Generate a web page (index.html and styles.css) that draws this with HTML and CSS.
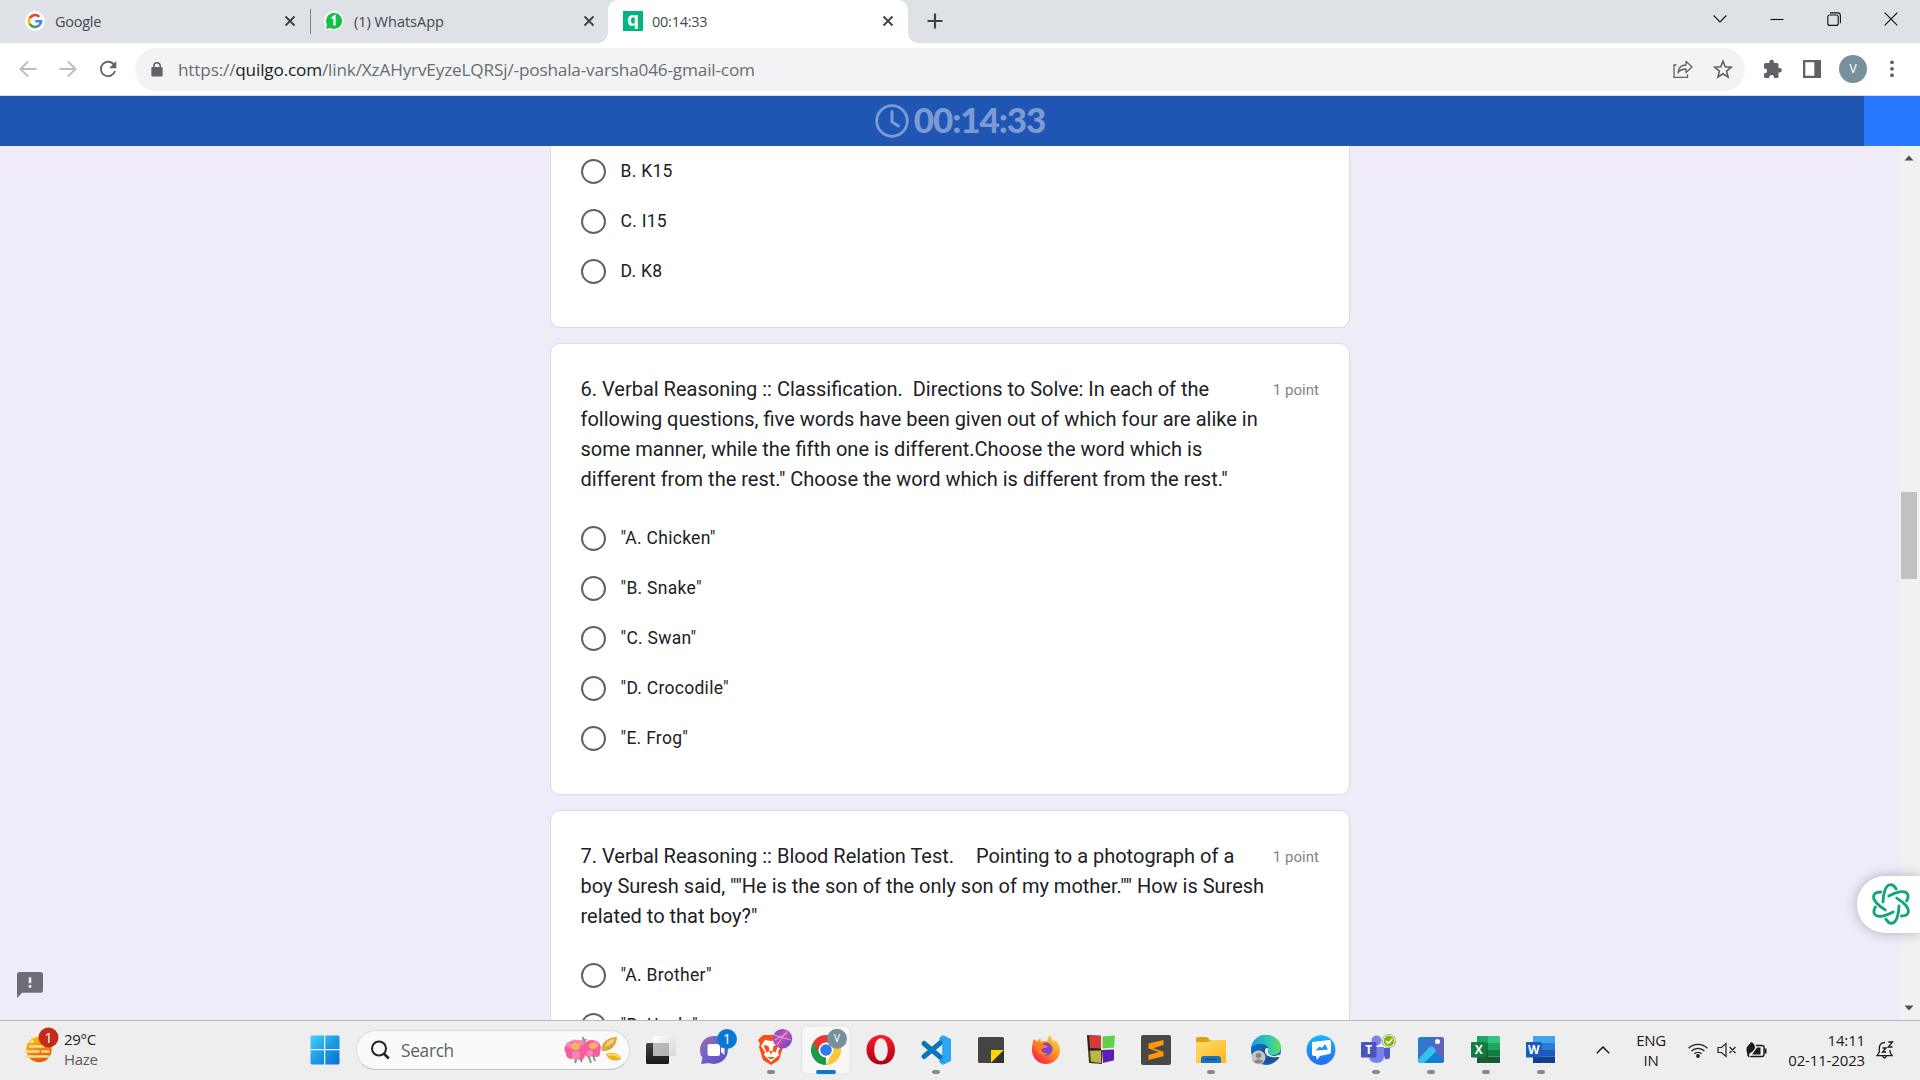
FILE: index.html
```html
<!DOCTYPE html>
<html lang="en">
<head>
<meta charset="utf-8">
<title>00:14:33</title>
<link rel="stylesheet" href="styles.css">
</head>
<body>
<header class="tabstrip">
  <div class="tab tab-google">
    <svg width="20" height="20" viewBox="0 0 20 20"><circle cx="10" cy="10" r="10" fill="#fff"/><g fill="none" stroke-width="2.6"><path d="M14.3 5.9A6 6 0 0 0 4.7 7.2" stroke="#ea4335"/><path d="M4.8 7A6 6 0 0 0 4.8 13" stroke="#fbbc05"/><path d="M4.7 12.8A6 6 0 0 0 13.9 14.5" stroke="#34a853"/><path d="M13.8 14.6A6 6 0 0 0 16 10.3H10.2" stroke="#4285f4"/></g></svg>
    <span class="tab-title">Google</span>
    <svg class="tab-close" width="12" height="12" viewBox="0 0 12 12"><path d="M1.5 1.5l9 9M10.5 1.5l-9 9"/></svg>
  </div>
  <div class="tab-divider"></div>
  <div class="tab tab-whatsapp">
    <svg width="20" height="20" viewBox="0 0 20 20"><path d="M.5 19.5l1.2-5A9.5 9.5 0 1 1 6 18.3z" fill="#fff"/><path d="M2 18l1-4.300A8 8 0 1 1 6.300 17z" fill="#12c143"/><path d="M7.700 7.300l2.800-1.900v9.200" fill="none" stroke="#fff" stroke-width="2.200"/></svg>
    <span class="tab-title tab-title-wide">(1) WhatsApp</span>
    <svg class="tab-close" width="12" height="12" viewBox="0 0 12 12"><path d="M1.5 1.5l9 9M10.5 1.5l-9 9"/></svg>
  </div>
  <div class="tab tab-active">
    <span class="quilgo-mark">q</span>
    <span class="tab-title">00:14:33</span>
    <svg class="tab-close" width="12" height="12" viewBox="0 0 12 12"><path d="M1.5 1.5l9 9M10.5 1.5l-9 9"/></svg>
  </div>
  <svg class="new-tab" width="16" height="16" viewBox="0 0 16 16"><path d="M8 .5v15M.5 8h15"/></svg>
  <div class="window-controls">
    <svg viewBox="0 0 14 14"><path d="M.7 3.500L7 10l6.300-6.500" stroke-width="1.100"/></svg>
    <svg viewBox="0 0 14 14"><path d="M.5 7.500h13"/></svg>
    <svg viewBox="0 0 14 14"><rect x=".8" y="3" width="10.400" height="10.400" rx="2"/><path d="M3 .9h7.500q2.900 0 2.900 2.900v7.500"/></svg>
    <svg viewBox="0 0 14 14"><path d="M.7 .7l12.600 12.600M13.300 .7L.7 13.300" stroke-width="1.200"/></svg>
  </div>
</header>
<nav class="toolbar">
  <div class="nav-buttons">
    <svg class="nav-off" viewBox="0 0 18 18"><path d="M17.500 9H2M9 1.500L1.500 9 9 16.500"/></svg>
    <svg class="nav-off" viewBox="0 0 18 18"><path d="M.5 9H16M9 1.500L16.500 9 9 16.500"/></svg>
    <svg class="nav-on" viewBox="0 0 18 18"><path d="M15 4.800A7.200 7.200 0 1 0 16 11"/><path d="M17.300 1v7.200h-7.200z" fill="#5f6368" stroke="none"/></svg>
  </div>
  <div class="omnibox">
    <svg width="12" height="15" viewBox="0 0 12 15"><rect x=".4" y="5" width="11.200" height="9.500" rx="1.200" fill="#5f6368"/><path d="M2.800 6V3.900a3.200 3.200 0 0 1 6.400 0V6" fill="none" stroke="#5f6368" stroke-width="1.500"/></svg>
    <span class="url">https://<b>quilgo.com</b>/link/XzAHyrvEyzeLQRSj/-poshala-varsha046-gmail-com</span>
    <svg class="share" width="20" height="20" viewBox="0 0 20 20"><g fill="none" stroke="#5f6368" stroke-width="1.300"><path d="M3.500 6H1v12.300h13.500v-3"/><path d="M5 14c.4-5 3-8 8-8V2.300l6 5.700-6 5.500V10c-4 0-6.500 1-8 4z" stroke-linejoin="round"/></g></svg>
    <svg width="20" height="20" viewBox="0 0 20 20"><path d="M10 2.200l2.200 5.600 6 .4-4.600 3.900 1.500 5.900L10 14.800 4.900 18l1.500-5.900L1.800 8.200l6-.4z" fill="none" stroke="#5f6368" stroke-width="1.600"/></svg>
  </div>
  <div class="toolbar-actions">
    <svg width="20" height="20" viewBox="0 0 20 20"><path d="M1 5.500Q1 4 2.500 4h3.800V3a2.300 2.300 0 0 1 4.600 0v1H14q1.500 0 1.500 1.500v3.500h1a2.300 2.300 0 0 1 0 4.600h-1v4q0 1.500-1.500 1.500h-3v-.8a2.400 2.400 0 0 0-4.800 0v.8H2.500Q1 19.100 1 17.600v-3.300h.7a2.400 2.400 0 0 0 0-4.800H1z" fill="#5f6368"/></svg>
    <svg width="18" height="18" viewBox="0 0 18 18"><path d="M0 0h18v18H0zM2.300 2.300v13.400h9V2.300z" fill="#5f6368" fill-rule="evenodd"/></svg>
    <span class="avatar">V</span>
    <svg width="6" height="18" viewBox="0 0 6 18"><g fill="#5f6368"><circle cx="3" cy="2.300" r="1.900"/><circle cx="3" cy="8.800" r="1.900"/><circle cx="3" cy="15.200" r="1.900"/></g></svg>
  </div>
</nav>
<div class="timer">
  <div class="timer-value">
    <svg width="34" height="34" viewBox="0 0 34 34"><g fill="none" stroke="#7c9ad3" stroke-linecap="round"><circle cx="17" cy="17" r="15.300" stroke-width="2.800"/><path d="M17 7.500v10.500l6.500 4" stroke-width="3"/></g></svg>
    <span>00:14:33</span>
  </div>
</div>
<main class="viewport">
  <div class="page">
    <section class="card card-cut">
      <label class="option"><i class="radio"></i><span>B. K15</span></label>
      <label class="option"><i class="radio"></i><span>C. I15</span></label>
      <label class="option"><i class="radio"></i><span>D. K8</span></label>
    </section>
    <section class="card">
      <div class="question"><p>6. Verbal Reasoning :: Classification.&nbsp; Directions to Solve: In each of the<br>following questions, five words have been given out of which four are alike in<br>some manner, while the fifth one is different.Choose the word which is<br>different from the rest." Choose the word which is different from the rest."</p><span class="points">1 point</span></div>
      <label class="option"><i class="radio"></i><span>"A. Chicken"</span></label>
      <label class="option"><i class="radio"></i><span>"B. Snake"</span></label>
      <label class="option"><i class="radio"></i><span>"C. Swan"</span></label>
      <label class="option"><i class="radio"></i><span>"D. Crocodile"</span></label>
      <label class="option"><i class="radio"></i><span>"E. Frog"</span></label>
    </section>
    <section class="card">
      <div class="question"><p>7. Verbal Reasoning :: Blood Relation Test.<span class="wide-gap">&nbsp; &nbsp; </span>Pointing to a photograph of a<br>boy Suresh said, ""He is the son of the only son of my mother."" How is Suresh<br>related to that boy?"</p><span class="points">1 point</span></div>
      <label class="option"><i class="radio"></i><span>"A. Brother"</span></label>
      <label class="option"><i class="radio"></i><span>"B. Uncle"</span></label>
    </section>
  </div>
  <div class="scrollbar">
    <svg width="10" height="6" viewBox="0 0 10 6"><path d="M5 .5L9.500 5.500h-9z" fill="#505050"/></svg>
    <div class="thumb"></div>
    <svg width="10" height="6" viewBox="0 0 10 6"><path d="M5 5.500L9.500 .5h-9z" fill="#505050"/></svg>
  </div>
  <svg class="report" width="26" height="26" viewBox="0 0 26 26"><path d="M2.600 0h20.800Q26 0 26 2.600v15.600q0 2.600-2.600 2.600H5.200L0 26V2.600Q0 0 2.600 0z" fill="#706c76"/><path d="M11.700 5.200h2.600v6h-2.600zM11.700 13h2.600v2.700h-2.600z" fill="#efebf9"/></svg>
  <div class="assistant">
    <svg width="42" height="42" viewBox="-21 -21 42 42"><g fill="none" stroke="#10a37f" stroke-width="2.800" stroke-linecap="round">
      <path id="petal" d="M-8-2C-7.800-9-6-19.300-.3-19.300C2.500-19.300 4-17 5.200-15"/>
      <use href="#petal" transform="rotate(60)"/><use href="#petal" transform="rotate(120)"/><use href="#petal" transform="rotate(180)"/><use href="#petal" transform="rotate(240)"/><use href="#petal" transform="rotate(300)"/></g></svg>
  </div>
</main>
<footer class="taskbar">
  <div class="weather">
    <svg width="36" height="40" viewBox="0 0 36 40"><defs><linearGradient id="sun" x2=".4" y2="1"><stop stop-color="#fdd000"/><stop offset="1" stop-color="#e8590c"/></linearGradient></defs><circle cx="15" cy="22.500" r="12.700" fill="url(#sun)"/><g stroke="#f0dba4" stroke-width="2.400" stroke-linecap="round"><path d="M6 14.500h3M6 19.500h13M1.500 24.500h13M18.500 24.500h6M1.500 29.500h23"/></g><circle cx="24.500" cy="10.500" r="10" fill="#c42b1c"/><text x="24.500" y="15.800" text-anchor="middle" class="badge-text">1</text></svg>
    <div class="weather-text"><span>29°C</span><span class="muted">Haze</span></div>
  </div>
  <div class="apps">
    <svg class="start" width="30" height="30" viewBox="0 0 30 30"><defs><linearGradient id="win" x2="1" y2="1" gradientUnits="objectBoundingBox"><stop stop-color="#4bd0ff"/><stop offset=".5" stop-color="#1c9be6"/><stop offset="1" stop-color="#0673d3"/></linearGradient></defs><path d="M1.500.500H14V14H.500V1.500zM15.300.500H28Q29.500.500 29.500 2V14H15.300zM.500 15.300H14V29.500H2Q.500 29.500.500 28zM15.300 15.300H29.500V28Q29.500 29.500 28 29.500H15.300z" fill="url(#win)"/></svg>
    <div class="search">
      <svg width="20" height="20" viewBox="0 0 20 20"><g fill="none" stroke="#222" stroke-width="2"><circle cx="9" cy="8.500" r="7"/><path d="M13.800 13.500l5 5" stroke-width="2.600"/></g></svg>
      <span>Search</span>
      <svg width="60" height="30" viewBox="0 0 60 30"><path d="M11 20l2 7M15 19l-3 9M20 2l1 7M23 4l-4 6M25 20l3 8M29 18l3 8M20 20l-2 7" stroke="#7d9f83" stroke-width="2"/><g fill="#f55f9b"><ellipse cx="13" cy="14" rx="11.500" ry="9"/><circle cx="8" cy="19" r="5"/><circle cx="17" cy="20" r="5"/><ellipse cx="29" cy="13" rx="9" ry="8"/><circle cx="26" cy="18" r="4"/><circle cx="33" cy="18" r="4"/></g><g fill="#fa86b5"><circle cx="6" cy="10" r="3"/><circle cx="13" cy="20" r="4"/><circle cx="18" cy="8" r="3"/><circle cx="27" cy="18" r="3"/><circle cx="33" cy="9" r="3"/><circle cx="12" cy="7" r="2.500"/></g><ellipse cx="12.500" cy="11.500" rx="4.500" ry="3.500" fill="#f2b75e"/><ellipse cx="30" cy="11" rx="4" ry="3" fill="#f2b75e"/><path d="M39 16C37 8 45 2 54 2c0 8-6 15-15 14z" fill="#dba83c"/><path d="M42 12C43 7 47 4 52 4c-2 5-6 6-10 8z" fill="#f3d281"/><path d="M43 19c7-3 14 0 15 5-4 3-13 2-15-5z" fill="#e9b424"/><path d="M45 20c5-1 9 0 11 3" stroke="#fbdb61" stroke-width="2" fill="none"/></svg>
    </div>
    <svg class="app" viewBox="0 0 55 60"><defs><linearGradient id="tv" x2="0" y2="1"><stop stop-color="#454545"/><stop offset="1" stop-color="#171717"/></linearGradient><linearGradient id="tw" x2="1" y2="1"><stop stop-color="#fff"/><stop offset="1" stop-color="#d6d6d6"/></linearGradient></defs><rect x="13" y="23" width="23" height="21" rx="1.500" fill="url(#tv)"/><rect x="20" y="16" width="23" height="20" rx="1.500" fill="url(#tw)"/><path d="M20 23h16v13H20z" fill="#aaa" opacity=".8"/></svg>
    <svg class="app" viewBox="0 0 55 60"><defs><linearGradient id="ch" x2="1" y2="1"><stop stop-color="#9b6fb3"/><stop offset="1" stop-color="#4d4fd0"/></linearGradient></defs><path d="M13 44l1.500-6A14 14 0 1 1 21 43z" fill="url(#ch)"/><rect x="19.500" y="24" width="12.500" height="12" rx="2" fill="#fff"/><path d="M33 28l3.500-3v10L33 32z" fill="#fff"/><circle cx="39" cy="19" r="10" fill="#0878d4"/><text x="39" y="24.300" text-anchor="middle" class="badge-text">1</text></svg>
    <svg class="app" viewBox="0 0 55 60"><defs><linearGradient id="bb" x2="1" y2="1"><stop stop-color="#7450bd"/><stop offset=".5" stop-color="#c54fae"/><stop offset="1" stop-color="#4544e0"/></linearGradient></defs><path d="M21 15h14l5 4-1 5 1 3-4 13-8 5-8-5-4-13 1-3-2-4 4-4z" fill="#fb4d16"/><path d="M22 20l6 1 6-1 4 6-3 6 1 3-8 7-7-7 1-3-4-6z" fill="#fff"/><path d="M20.500 25l5 1 1 5-3 1.500zM35.500 25l-5 1-1 5 3 1.500zM24 37h8l-4 2.500zM26 31h4l-2 3.500z" fill="#fb4d16"/><circle cx="39.500" cy="18.700" r="9.700" fill="url(#bb)"/><path d="M31 15l17 5M34 25L44 11M31.500 20l13-7" stroke="#d8a7df" stroke-width="1"/><rect x="24" y="50" width="8" height="4" rx="2" fill="#888"/></svg>
    <svg class="app" viewBox="0 0 55 60"><rect x="4" y="6" width="48" height="48" rx="5" fill="#f8f8f8" stroke="#e2e2e2"/><path d="M28 30L28 45A15 15 0 0 1 15 22.500z" fill="#1f9a48"/><path d="M28 22.500H41A15 15 0 0 1 28 45L34 33z" fill="#fdc72f"/><path d="M15 22.500A15 15 0 0 1 41 22.500H28L21.500 33.500z" fill="#e33b2e"/><circle cx="28" cy="30" r="7.500" fill="#fff"/><circle cx="28" cy="30" r="5.800" fill="#2f7ded"/><circle cx="39" cy="18.700" r="10" fill="#78909c"/><text x="39" y="22.300" text-anchor="middle" class="v-text">V</text><rect x="18" y="50" width="20" height="4" rx="2" fill="#0b78d4"/></svg>
    <svg class="app" viewBox="0 0 55 60"><defs><linearGradient id="op" x2="0" y2="1"><stop stop-color="#ff1b2d"/><stop offset="1" stop-color="#a70014"/></linearGradient></defs><path fill-rule="evenodd" d="M28 15c8.300 0 14 6.500 14 15s-5.700 14.500-14 14.500S13.500 38.500 13.500 30 19.700 15 28 15zm0 3.300c-4 0-6.700 5-6.700 11.700S24 41 28 41s6.700-4.500 6.700-11S32 18.300 28 18.300z" fill="url(#op)"/></svg>
    <svg class="app" viewBox="0 0 55 60"><path d="M16 23.500L37 41M16 36.500L37 19" stroke="#0877b9" stroke-width="5" stroke-linecap="round"/><path d="M34.500 15l8.500 4v22l-8.500 4z" fill="#2da5f2"/><path d="M34.500 15L31 18.500l4 5v13l-4 5 3.500 3.500z" fill="#249ce8"/><rect x="24" y="50" width="8" height="4" rx="2" fill="#888"/></svg>
    <svg class="app" viewBox="0 0 55 60"><rect x="15" y="17" width="26" height="26" rx="1.500" fill="#444"/><path d="M28 30h13L28 43z" fill="#ffd500"/><path d="M41 30v13H28z" fill="#333"/></svg>
    <svg class="app" viewBox="0 0 55 60"><defs><linearGradient id="ff" x1="1" x2=".2" y2="1"><stop stop-color="#ffe83a"/><stop offset=".5" stop-color="#ff9123"/><stop offset="1" stop-color="#f7154d"/></linearGradient></defs><path d="M15.500 19l4 2.500 3-4v4c3-1 6 0 7-1 0-3 1-4 3-5.500 0 3 2 5 4 7l1-2c3 4 4.500 6 4.500 10A14 14 0 0 1 14 30c0-5 1-7 1.500-11z" fill="url(#ff)"/><circle cx="28" cy="29" r="6.500" fill="#7b45cf"/><path d="M17 24c5-2 8 0 10 1l3 1c-2 3-4 1-6 3s2 5 6 4c-5 5-12 1-13-9z" fill="#ff7b20"/></svg>
    <svg class="app" viewBox="0 0 55 60"><path d="M14 15l14 1v14H15z" fill="#242424"/><path d="M16 15.500h12v13L17 28z" fill="#d63a38"/><path d="M29.500 16.500L42 15.500 41 27.500l-11.500 1z" fill="#61cf48"/><path d="M15 30h14v14l-13-1z" fill="#3f4223"/><path d="M17 31l11-.5V43l-10-1.500z" fill="#bdb745"/><path d="M29 30l12-.5v10.800L30 43z" fill="#5d1cb4"/></svg>
    <svg class="app" viewBox="0 0 55 60"><rect x="13" y="15" width="30" height="30" rx="2" fill="#484848"/><path d="M35.500 20v5L25 28.200l10.500 3.500v4.500L20.500 40v-5l10.500-3-10.500-3.500v-5z" fill="#ff9800"/></svg>
    <svg class="app" viewBox="0 0 55 60"><defs><linearGradient id="fo" x2="1" y2="1"><stop stop-color="#ffda73"/><stop offset="1" stop-color="#fcb912"/></linearGradient></defs><path d="M13 25v-6q0-2 2-2h9l3 3h14q2 0 2 2v5z" fill="#dfa00c"/><path d="M13 22h12l3-2h15v23H13z" fill="url(#fo)"/><path d="M18 43v-4q0-3 3-3h14q3 0 3 3v4z" fill="#1674c6"/><path d="M22 39.500h12" stroke="#084b88" stroke-width="1.300"/><rect x="24" y="50" width="8" height="4" rx="2" fill="#888"/></svg>
    <svg class="app" viewBox="0 0 55 60"><defs><linearGradient id="ed"><stop stop-color="#139bdd"/><stop offset=".6" stop-color="#32c9b0"/><stop offset="1" stop-color="#65df55"/></linearGradient></defs><circle cx="28" cy="30" r="15" fill="#0f68b7"/><path d="M13 29C14 19 21 15 28 15c9 0 15 6 15 12s-4 8-8 8c-6 0-6-3-4-5 0-4-4-6-8-6-5 0-9 2-10 5z" fill="url(#ed)"/><path d="M28 25c-4 4-1 13 10 11l4 0c-4 8-14 10-20 5 2-6 0-13 6-16z" fill="#16549b"/><path d="M31 29c-3 3 0 7 6 7l7-2v3l-5 0c-8 1-12-2-12-6 0-3 2-4 4-2z" fill="#f0f0f0"/><circle cx="20.500" cy="37.500" r="7" fill="#c9c6c4"/><circle cx="20.500" cy="35.500" r="2.800" fill="#888"/><path d="M15.500 41.500q5-4.500 10 0-5 4-10 0z" fill="#888"/></svg>
    <svg class="app" viewBox="0 0 55 60"><defs><linearGradient id="me" x2="0" y2="1"><stop stop-color="#19b6fb"/><stop offset="1" stop-color="#1f6cf5"/></linearGradient></defs><path d="M28 15a15 15 0 0 1 7 28q-7 4-14 0A15 15 0 0 1 28 15z" fill="url(#me)"/><path d="M19 22l17-2q2 0 2 2v10q0 2-2 2l-9 2-3 4-1-4h-2q-2 0-2-2z" fill="#fff"/><path d="M22.500 30.500l4-4 2.500 1.500 3-4 3 5.500z" fill="#1f91f6"/></svg>
    <svg class="app" viewBox="0 0 55 60"><circle cx="28.500" cy="20.500" r="5" fill="#7b83eb"/><path d="M34 28h8v8q0 4-5 3z" fill="#5059c9"/><path d="M21 27h15v9q0 7-7.500 7T21 36z" fill="#7b83eb"/><rect x="13" y="22" width="15.500" height="15.500" rx="1" fill="#4b53bc"/><text x="20.700" y="34.300" text-anchor="middle" class="office-text">T</text><circle cx="41" cy="21" r="7" fill="#999"/><circle cx="41" cy="21" r="6.200" fill="#fff"/><circle cx="41" cy="21" r="5.400" fill="#7fba00"/><path d="M38 21l2.300 2.300L44.500 19" fill="none" stroke="#fff" stroke-width="1.700"/><rect x="24" y="50" width="8" height="4" rx="2" fill="#888"/></svg>
    <svg class="app" viewBox="0 0 55 60"><defs><linearGradient id="ph" x2="1" y2=".7"><stop stop-color="#1582da"/><stop offset="1" stop-color="#7959ae"/></linearGradient></defs><rect x="15" y="17" width="26" height="26" rx="2.500" fill="url(#ph)"/><path d="M17 42l9.500-14q2-2 4 0L41 40q0 3-3 3H18z" fill="#137fd1"/><path d="M15 39.500l11-12q2.200-2 4.500 0l3 3.500L21 43h-3q-3 0-3-3.500z" fill="#34c1f0"/><circle cx="34.500" cy="21.500" r="2.500" fill="#fff"/><rect x="24" y="50" width="8" height="4" rx="2" fill="#888"/></svg>
    <svg class="app" viewBox="0 0 55 60"><path d="M19 16h11v7H19z" fill="#21a366"/><path d="M30 16h11q1 0 1 1v6H30z" fill="#33c481"/><path d="M19 23h11v7H19z" fill="#107c41"/><path d="M30 23h12v7H30z" fill="#21a366"/><path d="M19 30h11v6.500H19zM19 36.500h23V43H19z" fill="#185c37"/><path d="M30 30h12v6.500H30z" fill="#107c41"/><rect x="13" y="22" width="15.500" height="15.500" rx="1" fill="#107c41"/><text x="20.700" y="34.300" text-anchor="middle" class="office-text">X</text><rect x="24" y="50" width="8" height="4" rx="2" fill="#888"/></svg>
    <svg class="app" viewBox="0 0 55 60"><path d="M20 16h22v7H20z" fill="#41a5ee"/><path d="M20 23h22v7H20z" fill="#2b7cd3"/><path d="M20 30h22v6.500H20z" fill="#185abd"/><path d="M20 36.500h22V43H20z" fill="#103f91"/><rect x="13" y="22" width="15.500" height="15.500" rx="1" fill="#185abd"/><text x="20.700" y="34.300" text-anchor="middle" class="office-text">W</text><rect x="24" y="50" width="8" height="4" rx="2" fill="#888"/></svg>
  </div>
  <div class="tray">
    <svg width="14" height="8" viewBox="0 0 14 8"><path d="M.8 7.200L7 1l6.200 6.200" fill="none" stroke="#1b1b1b" stroke-width="1.500"/></svg>
    <div class="lang"><span>ENG</span><span>IN</span></div>
    <svg width="20" height="16" viewBox="0 0 20 16"><g fill="none" stroke="#222" stroke-width="1.300"><path d="M.6 6.200a13.300 13.300 0 0 1 18.800 0"/><path d="M3.500 9a9.200 9.200 0 0 1 13 0"/><path d="M6.400 11.800a5.100 5.100 0 0 1 7.200 0"/></g><circle cx="10" cy="14" r="1.900" fill="#222"/></svg>
    <svg width="20" height="16" viewBox="0 0 20 16"><path d="M1 5.500h3.500L9 1.500v13L4.500 10.500H1zM12.500 5l6 6M18.500 5l-6 6" fill="none" stroke="#222" stroke-width="1.200"/></svg>
    <svg width="22" height="18" viewBox="0 0 22 18"><path d="M10 4.500h6q2 0 2 2v7q0 2-2 2H4q-2 0-2-2" fill="none" stroke="#1b1b1b" stroke-width="1.400"/><path d="M18.500 7.500h2v5h-2zM6 14l4-7.500h4.500V13.500H6z" fill="#1b1b1b"/><path d="M1 12C-1 5 3 5 5 1c4 1 6 7 1 10-2 1-3 1-3 4H2z" fill="#1b1b1b"/><path d="M3.500 15.500L11 6" stroke="#eee" stroke-width="1.200"/></svg>
    <div class="clock"><span>14:11</span><span>02-11-2023</span></div>
    <svg width="18" height="20" viewBox="0 0 18 20"><path d="M9 2.500C5 2.500 3.300 5 3.300 8.500V12L1 15.700h15L14 12V10M6.500 16q2 4 4 0" fill="none" stroke="#1b1b1b" stroke-width="1.300"/><path d="M12.300 2h4.200l-4.200 5h4.200M6.500 8h3.500l-3.500 4h3.500" fill="none" stroke="#1b1b1b" stroke-width="1.300"/></svg>
  </div>
</footer>
</body>
</html>
```
FILE: styles.css
```css
* { box-sizing: border-box; }
body {
  margin: 0;
  width: 1920px;
  height: 1080px;
  overflow: hidden;
  display: flex;
  flex-direction: column;
  font-family: "Open Sans", "Noto Sans", sans-serif;
}
svg { display: block; flex: none; }
p { margin: 0; }

.tabstrip {
  height: 43px;
  background: #dee1e6;
  display: flex;
  align-items: center;
  flex: none;
  font-size: 14.5px;
  color: #45494d;
}
.tab { display: flex; align-items: center; height: 43px; padding-bottom: 1px; }
.tab-google { width: 310px; padding: 0 14px 1px 25px; gap: 10px; }
.tab-whatsapp { width: 297px; padding: 0 13px 1px 13px; gap: 10px; }
.tab-active {
  position: relative;
  width: 300px;
  padding: 0 14px 1px 15px;
  gap: 9px;
  background: #fff;
  border-radius: 10px 10px 0 0;
}
.tab-active::before, .tab-active::after {
  content: "";
  position: absolute;
  bottom: 0;
  width: 10px;
  height: 10px;
}
.tab-active::before { left: -10px; background: radial-gradient(circle at 0 0, transparent 9.5px, #fff 10px); }
.tab-active::after { right: -10px; background: radial-gradient(circle at 100% 0, transparent 9.5px, #fff 10px); }
.tab-title { flex: 1; letter-spacing: -0.25px; }
.tab-title-wide { letter-spacing: 0; }
.tab-close path { stroke: #3c4043; stroke-width: 1.8; }
.tab-divider { width: 1px; height: 25px; background: #808488; }
.quilgo-mark {
  width: 20px;
  height: 20px;
  background: #00b57f;
  color: #fff;
  font: 900 20px/15px Lato, sans-serif;
  text-align: center;
}
.new-tab { margin: -1px 0 0 19px; }
.new-tab path { stroke: #3c4043; stroke-width: 2.2; }
.window-controls { display: flex; gap: 43px; margin: -6px 22px 0 auto; }
.window-controls svg { width: 14px; height: 14px; fill: none; stroke: #111; stroke-width: 1.1; }

.toolbar {
  height: 53px;
  flex: none;
  display: flex;
  align-items: center;
  border-bottom: 1px solid #dadce0;
  background: #fff;
}
.nav-buttons { display: flex; gap: 22px; width: 135px; padding-left: 19px; }
.nav-buttons svg { width: 18px; height: 18px; fill: none; stroke-width: 1.8; }
.nav-off { stroke: #babcbe; }
.nav-on { stroke: #5f6368; }
.omnibox {
  width: 1610px;
  height: 43px;
  border-radius: 22px;
  background: #f1f3f4;
  display: flex;
  align-items: center;
  padding: 0 12px 0 16px;
}
.url { flex: 1; margin-left: 15px; font-size: 17.2px; color: #696d71; letter-spacing: -0.17px; }
.url b { font-weight: 400; color: #202124; }
.share { margin-right: 20px; }
.toolbar-actions { display: flex; align-items: center; padding-left: 18px; }
.toolbar-actions svg:nth-child(2) { margin: 0 18px 0 20px; }
.avatar {
  width: 28px;
  height: 28px;
  border-radius: 50%;
  background: #78909c;
  color: #fff;
  font: 12px/28px Roboto, sans-serif;
  text-align: center;
  margin-right: 22px;
}

.timer {
  height: 50px;
  flex: none;
  background: linear-gradient(to right, #1f55b3 1864px, #2979ff 1864px);
  display: flex;
  justify-content: center;
}
.timer-value {
  display: flex;
  align-items: center;
  gap: 5px;
  color: #7c9ad3;
  font: 900 35px/46px Lato, sans-serif;
  letter-spacing: -1.1px;
}
.timer-value span { height: 50px; }

.viewport {
  position: relative;
  height: 874px;
  flex: none;
  overflow: hidden;
  display: flex;
  background: #efebf9;
}
.page { flex: 1; display: flex; flex-direction: column; align-items: center; gap: 15px; font-family: Roboto, sans-serif; color: #202124; }
.card {
  width: 800px;
  flex: none;
  padding: 30px 30px 31px 29.5px;
  background: #fff;
  border: 1px solid #dadce0;
  border-radius: 10px;
}
.card-cut { padding-top: 0; border-top: 0; border-radius: 0 0 10px 10px; }
.question {
  display: flex;
  justify-content: space-between;
  margin-bottom: 19px;
  font-size: 20px;
  line-height: 30px;
}
.question p { white-space: nowrap; }
.wide-gap { margin-right: 2px; }
.points { font-size: 15px; letter-spacing: 0.05px; color: #80848a; position: relative; top: 1px; }
.option { display: flex; gap: 15px; height: 50px; font-size: 17.5px; line-height: 50px; letter-spacing: 0.28px; }
.radio { width: 25px; height: 25px; margin-top: 13px; border: 2.5px solid #5f6368; border-radius: 50%; }
.scrollbar {
  width: 20px;
  background: #f1f1f1;
  display: flex;
  flex-direction: column;
  align-items: center;
  padding: 9px 2px 9px 0;
}
.thumb { width: 16px; height: 87px; margin: 331px 0 auto; background: #c1c1c1; }
.report { position: absolute; left: 17px; top: 826px; }
.assistant {
  position: absolute;
  right: 0;
  top: 730px;
  width: 63px;
  height: 57px;
  padding: 7px 0 0 13px;
  border-radius: 28px 0 0 28px;
  background: #fff;
  box-shadow: 0 0 12px rgba(60, 50, 80, .35);
}

.taskbar {
  height: 60px;
  flex: none;
  display: flex;
  background: #eee;
  border-top: 1px solid #bbb;
  color: #1b1b1b;
  font-size: 15px;
}
.weather { width: 297px; display: flex; padding: 7px 0 0 24px; gap: 4px; }
.weather svg { margin-top: -1px; }
.weather-text, .lang, .clock { display: flex; flex-direction: column; line-height: 20px; letter-spacing: -0.3px; }
.weather-text { padding-top: 1px; }
.muted { color: #5c5c5c; }
.badge-text { font: 14px "Open Sans", sans-serif; fill: #fff; }
.v-text { font: 10px Roboto, sans-serif; fill: #fff; }
.office-text { font: bold 12px "Open Sans", sans-serif; fill: #fff; }
.apps { display: flex; align-items: flex-start; height: 60px; }
.start { margin: 14px 16px 0 13px; }
.search {
  width: 274px;
  height: 40px;
  margin: 9px 3px 0 0;
  padding: 0 6px 0 13px;
  border: 1px solid #ddd;
  border-bottom-color: #c3c3c3;
  border-radius: 20px;
  background: #fafafa;
  display: flex;
  align-items: center;
  font-size: 17.3px;
  letter-spacing: -0.3px;
  color: #5f5f5f;
}
.search span { flex: 1; margin-left: 11px; }
.app { width: 55px; height: 60px; margin-top: -1px; }
.tray { flex: 1; display: flex; align-items: center; padding: 0 0 2px 28px; }
.lang { width: 40px; align-items: center; margin: 0 17px 0 21px; }
.tray > svg:nth-child(4) { margin: 0 9px; }
.clock { width: 97px; align-items: flex-end; margin-right: 11px; letter-spacing: -0.15px; }
```
